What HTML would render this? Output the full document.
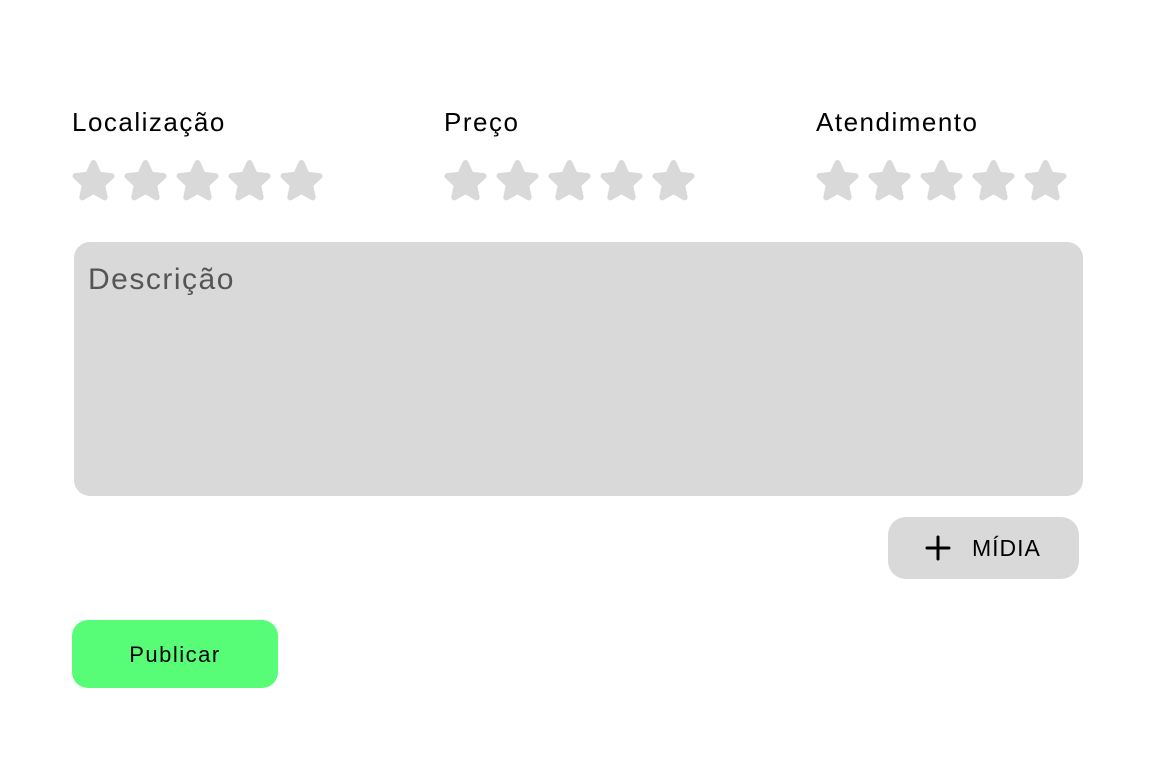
<!DOCTYPE html>
<html><head><meta charset="utf-8"><style>
body{margin:0;width:1156px;height:765px;background:#fff;font-family:"Liberation Sans",sans-serif;position:relative;overflow:hidden}
.lbl{position:absolute;top:107px;font-size:26px;color:#000;letter-spacing:1.5px}
svg.s{position:absolute;top:0;left:0}
.desc{position:absolute;left:74px;top:242px;width:1009px;height:254px;background:#d9d9d9;border-radius:16px}
.desc span{position:absolute;left:14px;top:21px;font-size:30px;color:#555;letter-spacing:1.5px}
.midia{position:absolute;left:888px;top:517px;width:191px;height:62px;background:#d9d9d9;border-radius:18px}
.midia span{position:absolute;left:84px;top:18px;font-size:23px;color:#000;letter-spacing:1px}
.pub{position:absolute;left:72px;top:620px;width:206px;height:68px;background:#58fd77;border-radius:16px;text-align:center;line-height:70px;font-size:22px;color:#000;letter-spacing:1.5px}
</style></head><body>
<div class="lbl" style="left:72px">Localização</div>
<div class="lbl" style="left:444px">Preço</div>
<div class="lbl" style="left:816px">Atendimento</div>
<svg class="s" width="1156" height="765">
<defs><path id="st" d="M0,-19 L5.3,-7.3 L18,-5.9 L8.6,2.8 L11.2,15.4 L0,9 L-11.2,15.4 L-8.6,2.8 L-18,-5.9 L-5.3,-7.3 Z" fill="#d9d9d9" stroke="#d9d9d9" stroke-width="6" stroke-linejoin="round"/></defs>
<g transform="translate(93.5,182)"><use href="#st"/><use href="#st" x="52"/><use href="#st" x="104"/><use href="#st" x="156"/><use href="#st" x="208"/></g>
<g transform="translate(465.5,182)"><use href="#st"/><use href="#st" x="52"/><use href="#st" x="104"/><use href="#st" x="156"/><use href="#st" x="208"/></g>
<g transform="translate(837.5,182)"><use href="#st"/><use href="#st" x="52"/><use href="#st" x="104"/><use href="#st" x="156"/><use href="#st" x="208"/></g>
</svg>
<div class="desc"><span>Descrição</span></div>
<div class="midia"><svg style="position:absolute;left:37px;top:18px" width="26" height="26"><path d="M13,2V24M2,13H24" stroke="#000" stroke-width="3" stroke-linecap="round"/></svg><span>MÍDIA</span></div>
<div class="pub">Publicar</div>
</body></html>
